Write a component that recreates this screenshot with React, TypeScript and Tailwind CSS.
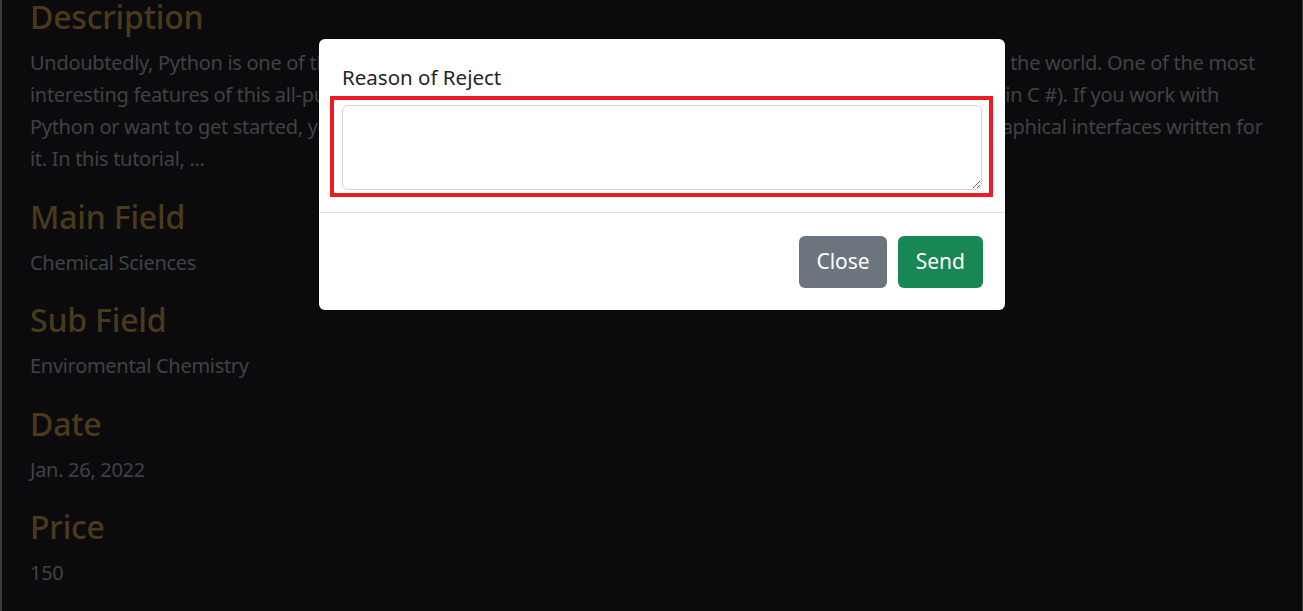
const fontStack = { fontFamily: '"Noto Sans", "Open Sans", sans-serif' };

function Section({ title, children }: { title: string; children: React.ReactNode }) {
  return (
    <div className="mb-[22.5px]">
      <h3 className="text-[32px] leading-[38px] font-medium text-[#4a3a1b] mb-[11px] tracking-[-0.2px]">{title}</h3>
      <p className="text-[20px] leading-[32px] text-[#414145] tracking-[-0.3px] whitespace-nowrap">{children}</p>
    </div>
  );
}

export default function App() {
  return (
    <div className="relative h-[611px] overflow-hidden bg-[#0b0b0d] border-l-2 border-r border-[#3b3b3d]" style={fontStack}>
      {/* page behind the backdrop */}
      <div className="pl-[28px] pr-[30px] -mt-[2px]">
        <Section title="Description">
          Undoubtedly, Python is one of the most popular and commonly used high-level programming languages in the world. One of the most
          <br />
          interesting features of this all-purpose language is the ability to easily develop desktop applications (just as in C #). If you work with
          <br />
          Python or want to get started, you have probably heard of some of the many useful libraries for building graphical interfaces written for
          <br />
          it. In this tutorial, ...
        </Section>
        <Section title="Main Field">Chemical Sciences</Section>
        <Section title="Sub Field">Enviromental Chemistry</Section>
        <Section title="Date">Jan. 26, 2022</Section>
        <Section title="Price">150</Section>
      </div>

      {/* reject modal */}
      <div className="absolute left-[317px] top-[39px] w-[686px] bg-white rounded-[6px]">
        <div className="relative px-[23px] pt-[23px] pb-[22px]">
          <label className="block text-[20.5px] leading-[30px] text-[#212529] mb-[13px]">Reason of Reject</label>
          <textarea className="block w-full h-[85px] border border-[#ced4da] rounded-[6px] bg-white outline-none" />
          <div className="absolute left-[11px] top-[57px] w-[663px] h-[101px] border-4 border-[#ed1c24] pointer-events-none" />
        </div>
        <div className="flex justify-end gap-[11px] border-t border-[#dee2e6] px-[22px] pt-[23px] pb-[22px]">
          <button className="h-[52px] px-[17px] rounded-[6px] bg-[#6c757d] text-white text-[21px]">Close</button>
          <button className="h-[52px] px-[18px] rounded-[6px] bg-[#198754] text-white text-[21px]">Send</button>
        </div>
      </div>
    </div>
  );
}
